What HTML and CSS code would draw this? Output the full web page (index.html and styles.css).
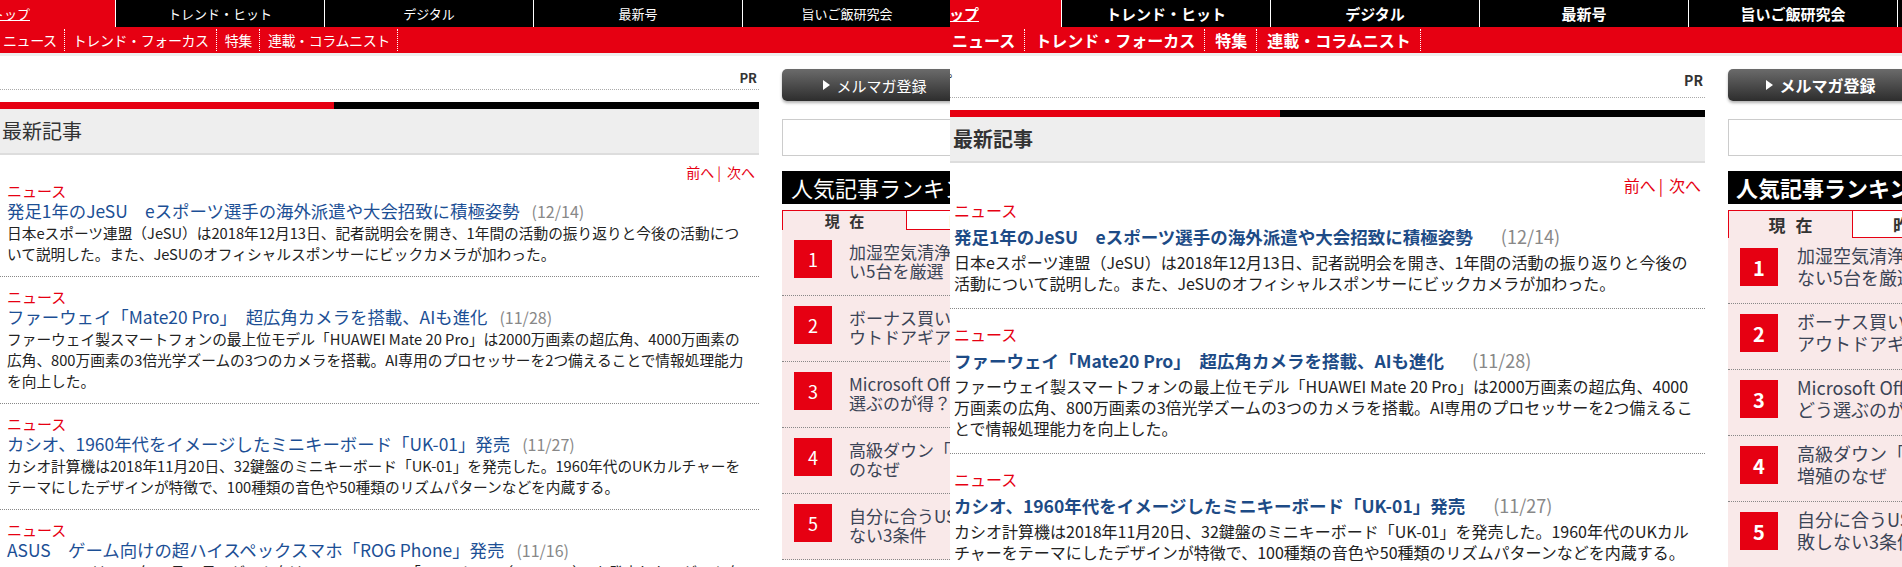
FILE: index.html
```html
<!DOCTYPE html>
<html lang="ja">
<head>
<meta charset="utf-8">
<title>最新記事</title>
<link rel="stylesheet" href="styles.css">
</head>
<body>
<div class="page">

  <section class="panel panel-a">
    <nav class="gnav">
      <a class="gnav-item is-current">トップ</a>
      <a class="gnav-item">トレンド・ヒット</a>
      <a class="gnav-item">デジタル</a>
      <a class="gnav-item">最新号</a>
      <a class="gnav-item">旨いご飯研究会</a>
      <a class="gnav-item">ライフ</a>
    </nav>
    <nav class="snav">
      <a class="snav-item">ニュース</a>
      <a class="snav-item">トレンド・フォーカス</a>
      <a class="snav-item">特集</a>
      <a class="snav-item">連載・コラムニスト</a>
    </nav>
    <div class="layout">
      <main class="main">
        <div class="topline"><span class="crumb">トップ</span><span class="pr">PR</span></div>
        <div class="bar"></div>
        <h2 class="sec-head">最新記事</h2>
        <div class="pager"><a>前へ</a><span class="pipe">|</span><a>次へ</a></div>
        <article class="entry">
          <p class="cat">ニュース</p>
          <h3 class="ttl"><a>発足1年のJeSU　eスポーツ選手の海外派遣や大会招致に積極姿勢</a><span class="date">(12/14)</span></h3>
          <p class="desc">日本eスポーツ連盟（JeSU）は2018年12月13日、記者説明会を開き、1年間の活動の振り返りと今後の活動について説明した。また、JeSUのオフィシャルスポンサーにビックカメラが加わった。</p>
        </article>
        <article class="entry">
          <p class="cat">ニュース</p>
          <h3 class="ttl"><a>ファーウェイ「Mate20 Pro」　超広角カメラを搭載、AIも進化</a><span class="date">(11/28)</span></h3>
          <p class="desc">ファーウェイ製スマートフォンの最上位モデル「HUAWEI Mate 20 Pro」は2000万画素の超広角、4000万画素の広角、800万画素の3倍光学ズームの3つのカメラを搭載。AI専用のプロセッサーを2つ備えることで情報処理能力を向上した。</p>
        </article>
        <article class="entry">
          <p class="cat">ニュース</p>
          <h3 class="ttl"><a>カシオ、1960年代をイメージしたミニキーボード「UK-01」発売</a><span class="date">(11/27)</span></h3>
          <p class="desc">カシオ計算機は2018年11月20日、32鍵盤のミニキーボード「UK-01」を発売した。1960年代のUKカルチャーをテーマにしたデザインが特徴で、100種類の音色や50種類のリズムパターンなどを内蔵する。</p>
        </article>
        <article class="entry">
          <p class="cat">ニュース</p>
          <h3 class="ttl"><a>ASUS　ゲーム向けの超ハイスペックスマホ「ROG Phone」発売</a><span class="date">(11/16)</span></h3>
          <p class="desc">ASUS JAPANは2018年11月16日、ゲーム向けスマートフォン「ROG Phone（ZS600KL）」を発売した。ゲーム向けはスペックの高さが特徴だ。</p>
        </article>
      </main>
      <aside class="side">
        <a class="mm-btn"><svg class="tri" width="7" height="10" viewBox="0 0 7 10"><path d="M0 0 L7 5 L0 10 Z" fill="#fff"/></svg>メルマガ登録</a>
        <div class="search"></div>
        <section class="rank">
          <h2 class="rank-head">人気記事ランキング</h2>
          <div class="rank-tabs"><span class="rank-tab is-on">現 在</span><span class="rank-tab">昨 日</span></div>
          <ol class="rank-list">
            <li class="rank-item"><span class="num">1</span><p class="rank-ttl">加湿空気清浄機 買って失敗しな<br>い5台を厳選</p></li>
            <li class="rank-item"><span class="num">2</span><p class="rank-ttl">ボーナス買いで狙う“今買うべきア<br>ウトドアギア”</p></li>
            <li class="rank-item"><span class="num">3</span><p class="rank-ttl">Microsoft Office 2019と365、<br>選ぶのが得？</p></li>
            <li class="rank-item"><span class="num">4</span><p class="rank-ttl">高級ダウン「カナダグース」増殖<br>のなぜ</p></li>
            <li class="rank-item"><span class="num">5</span><p class="rank-ttl">自分に合うUSBメモリー選び 失敗し<br>ない3条件</p></li>
          </ol>
        </section>
      </aside>
    </div>
  </section>

  <section class="panel panel-b">
    <nav class="gnav">
      <a class="gnav-item is-current">トップ</a>
      <a class="gnav-item">トレンド・ヒット</a>
      <a class="gnav-item">デジタル</a>
      <a class="gnav-item">最新号</a>
      <a class="gnav-item">旨いご飯研究会</a>
      <a class="gnav-item">ライフ</a>
    </nav>
    <nav class="snav">
      <a class="snav-item">ニュース</a>
      <a class="snav-item">トレンド・フォーカス</a>
      <a class="snav-item">特集</a>
      <a class="snav-item">連載・コラムニスト</a>
    </nav>
    <div class="layout">
      <main class="main">
        <div class="topline"><span class="crumb">トップ</span><span class="pr">PR</span></div>
        <div class="bar"></div>
        <h2 class="sec-head">最新記事</h2>
        <div class="pager"><a>前へ</a><span class="pipe">|</span><a>次へ</a></div>
        <article class="entry">
          <p class="cat">ニュース</p>
          <h3 class="ttl"><a>発足1年のJeSU　eスポーツ選手の海外派遣や大会招致に積極姿勢</a><span class="date">(12/14)</span></h3>
          <p class="desc">日本eスポーツ連盟（JeSU）は2018年12月13日、記者説明会を開き、1年間の活動の振り返りと今後の活動について説明した。また、JeSUのオフィシャルスポンサーにビックカメラが加わった。</p>
        </article>
        <article class="entry">
          <p class="cat">ニュース</p>
          <h3 class="ttl"><a>ファーウェイ「Mate20 Pro」　超広角カメラを搭載、AIも進化</a><span class="date">(11/28)</span></h3>
          <p class="desc">ファーウェイ製スマートフォンの最上位モデル「HUAWEI Mate 20 Pro」は2000万画素の超広角、4000万画素の広角、800万画素の3倍光学ズームの3つのカメラを搭載。AI専用のプロセッサーを2つ備えることで情報処理能力を向上した。</p>
        </article>
        <article class="entry">
          <p class="cat">ニュース</p>
          <h3 class="ttl"><a>カシオ、1960年代をイメージしたミニキーボード「UK-01」発売</a><span class="date">(11/27)</span></h3>
          <p class="desc">カシオ計算機は2018年11月20日、32鍵盤のミニキーボード「UK-01」を発売した。1960年代のUKカルチャーをテーマにしたデザインが特徴で、100種類の音色や50種類のリズムパターンなどを内蔵する。</p>
        </article>
      </main>
      <aside class="side">
        <a class="mm-btn"><svg class="tri" width="7" height="10" viewBox="0 0 7 10"><path d="M0 0 L7 5 L0 10 Z" fill="#fff"/></svg>メルマガ登録</a>
        <div class="search"></div>
        <section class="rank">
          <h2 class="rank-head">人気記事ランキング</h2>
          <div class="rank-tabs"><span class="rank-tab is-on">現 在</span><span class="rank-tab">昨 日</span></div>
          <ol class="rank-list">
            <li class="rank-item"><span class="num">1</span><p class="rank-ttl">加湿空気清浄機 買って失敗し<br>ない5台を厳選</p></li>
            <li class="rank-item"><span class="num">2</span><p class="rank-ttl">ボーナス買いで狙う“今買うべき”<br>アウトドアギア</p></li>
            <li class="rank-item"><span class="num">3</span><p class="rank-ttl">Microsoft Office 2019と365、<br>どう選ぶのが得？</p></li>
            <li class="rank-item"><span class="num">4</span><p class="rank-ttl">高級ダウン「カナダグース」<br>増殖のなぜ</p></li>
            <li class="rank-item"><span class="num">5</span><p class="rank-ttl">自分に合うUSBメモリー選び 失<br>敗しない3条件</p></li>
          </ol>
        </section>
      </aside>
    </div>
  </section>

</div>
</body>
</html>
```

FILE: styles.css
```css
* { box-sizing: border-box; margin: 0; padding: 0; }
html, body { margin: 0; background: #fff; }
body {
  font-family: "Noto Sans CJK JP", "Noto Sans", sans-serif;
  color: #222;
}
a { color: inherit; text-decoration: none; }
ol { list-style: none; }

.page { display: flex; width: 1902px; height: 567px; overflow: hidden; }
.panel { flex: none; height: 567px; overflow: hidden; }
.panel-a { width: 950px; }
.panel-b { width: 952px; }

/* global nav */
.gnav { display: flex; height: 27px; background: #000; }
.panel-a .gnav { margin-left: -94px; font-size: 13px; }
.panel-b .gnav { margin-left: -98px; font-size: 15px; font-weight: 700; }
.gnav-item {
  flex: none; width: 209px;
  display: flex; align-items: center; justify-content: center;
  color: #fff; border-left: 1px solid #fff; white-space: nowrap;
}
.gnav-item.is-current { background: #e60012; border-left: none; text-decoration: underline; }

/* sub nav */
.snav {
  display: flex; align-items: center; height: 29px;
  background: #e60012; border-bottom: 3px solid #eeeeee;
}
.snav-item { color: #fff; line-height: 22px; border-right: 1px dotted #fff; white-space: nowrap; }
.panel-a .snav-item { font-size: 14px; padding: 0 7px 0 8px; letter-spacing: -0.4px; }
.panel-a .snav-item:first-child { padding-left: 3px; }
.panel-b .snav-item { font-size: 16px; font-weight: 700; padding: 0 9px 0 10px; }
.panel-b .snav-item:first-child { padding-left: 2px; }

/* layout */
.layout { display: flex; gap: 23px; }
.main { flex: none; }
.panel-a .main { width: 759px; }
.panel-b .main { width: 755px; }
.side { flex: none; width: 300px; }

/* top line */
.topline {
  display: flex; justify-content: space-between;
  border-bottom: 1px dotted #aaa;
}
.crumb, .pr { font-weight: 700; color: #333; }
.panel-a .topline { padding: 13px 2px 2px 0; line-height: 18px; font-size: 13px; }
.panel-a .crumb { margin-left: -60px; }
.panel-b .topline { padding: 14px 2px 7px 0; line-height: 20px; font-size: 14px; }
.panel-b .crumb { margin-left: -40px; font-weight: 400; }

.bar { height: 7px; margin-top: 12px; }
.panel-a .bar { background: linear-gradient(to right, #e60012 334px, #000 334px); }
.panel-b .bar { background: linear-gradient(to right, #e60012 330px, #000 330px); }

.sec-head {
  height: 46px; background: #eeeeee; border-bottom: 2px solid #dddddd;
  font-size: 20px; line-height: 44px; color: #333;
}
.panel-a .sec-head { font-weight: 400; padding-left: 2px; }
.panel-b .sec-head { font-weight: 700; padding-left: 3px; }

.pager { text-align: right; color: #e60012; padding-right: 4px; }
.pager .pipe { margin: 0 6px 0 3px; }
.panel-a .pager { font-size: 14px; line-height: 18px; padding-top: 8px; }
.panel-b .pager { font-size: 16px; line-height: 22px; padding-top: 11px; padding-bottom: 3px; }

/* entries */
.entry { border-bottom: 1px dotted #888; }
.cat { color: #e60012; }
.ttl { color: #1c4f95; }
.date { color: #888; font-weight: 400; }

.panel-a .entry { padding: 10px 7px 12px; }
.panel-a .pager + .entry { padding-top: 0; }
.panel-a .cat { font-size: 15px; line-height: 19px; }
.panel-a .ttl { font-size: 17.4px; line-height: 22px; font-weight: 400; }
.panel-a .date { font-size: 16px; margin-left: 12px; }
.panel-a .desc { font-size: 14.7px; line-height: 21px; }

.panel-b .entry { padding: 14px 4px 14px; }
.panel-b .pager + .entry { padding-top: 0; }
.panel-b .cat { font-size: 16px; line-height: 22px; }
.panel-b .ttl { font-size: 17.5px; line-height: 30px; font-weight: 700; color: #1d4b86; }
.panel-b .date { font-size: 18px; margin-left: 28px; }
.panel-b .desc { font-size: 16px; line-height: 21px; }

/* sidebar */
.mm-btn {
  display: flex; align-items: center; justify-content: center; gap: 4px;
  width: 186px; height: 32px; margin-top: 13px;
  border-radius: 5px;
  background: linear-gradient(#6b6b6b, #2d2d2d);
  box-shadow: 0 2px 3px rgba(0,0,0,0.3);
  color: #fff; font-size: 15px;
}
.panel-b .mm-btn { font-weight: 700; font-size: 16px; }
.tri { flex: none; margin-right: 2px; }

.search { height: 37px; margin-top: 18px; border: 1px solid #cccccc; background: #fff; }

.rank { margin-top: 15px; }
.rank-head { height: 33px; background: #000; color: #fff; font-size: 22px; line-height: 33px; white-space: nowrap; }
.panel-a .rank-head { font-weight: 400; padding-left: 9px; }
.panel-b .rank-head { font-weight: 700; padding-left: 8px; }

.rank-tabs { display: flex; margin-top: 6px; }
.panel-a .rank-tabs { height: 20px; font-size: 15px; }
.panel-b .rank-tabs { height: 28px; font-size: 17px; }
.rank-tab {
  flex: none; width: 125px; display: flex; align-items: center; justify-content: center;
  border: 1px solid #e60012; border-left: none; background: #fff; color: #333; font-weight: 700;
  word-spacing: 6px;
}
.rank-tab.is-on { border-left: 1px solid #e60012; border-bottom: none; background: #f9e9e9; }

.rank-list { background: #f9e9e9; }
.rank-item {
  display: flex; align-items: flex-start;
  height: 66px; padding: 10px 0 0 12px;
  border-bottom: 1px dotted #888;
}
.num {
  flex: none; width: 38px; height: 38px; background: #e60012; color: #fff;
  display: flex; align-items: center; justify-content: center;
  font-size: 18px;
}
.rank-ttl { color: #3b4456; white-space: nowrap; }
.panel-a .rank-ttl { font-size: 17px; line-height: 19px; margin: 2px 0 0 17px; }
.panel-b .rank-ttl { font-size: 18px; line-height: 22px; margin: -4px 0 0 19px; }
.panel-b .num { font-weight: 700; font-size: 20px; }
```
